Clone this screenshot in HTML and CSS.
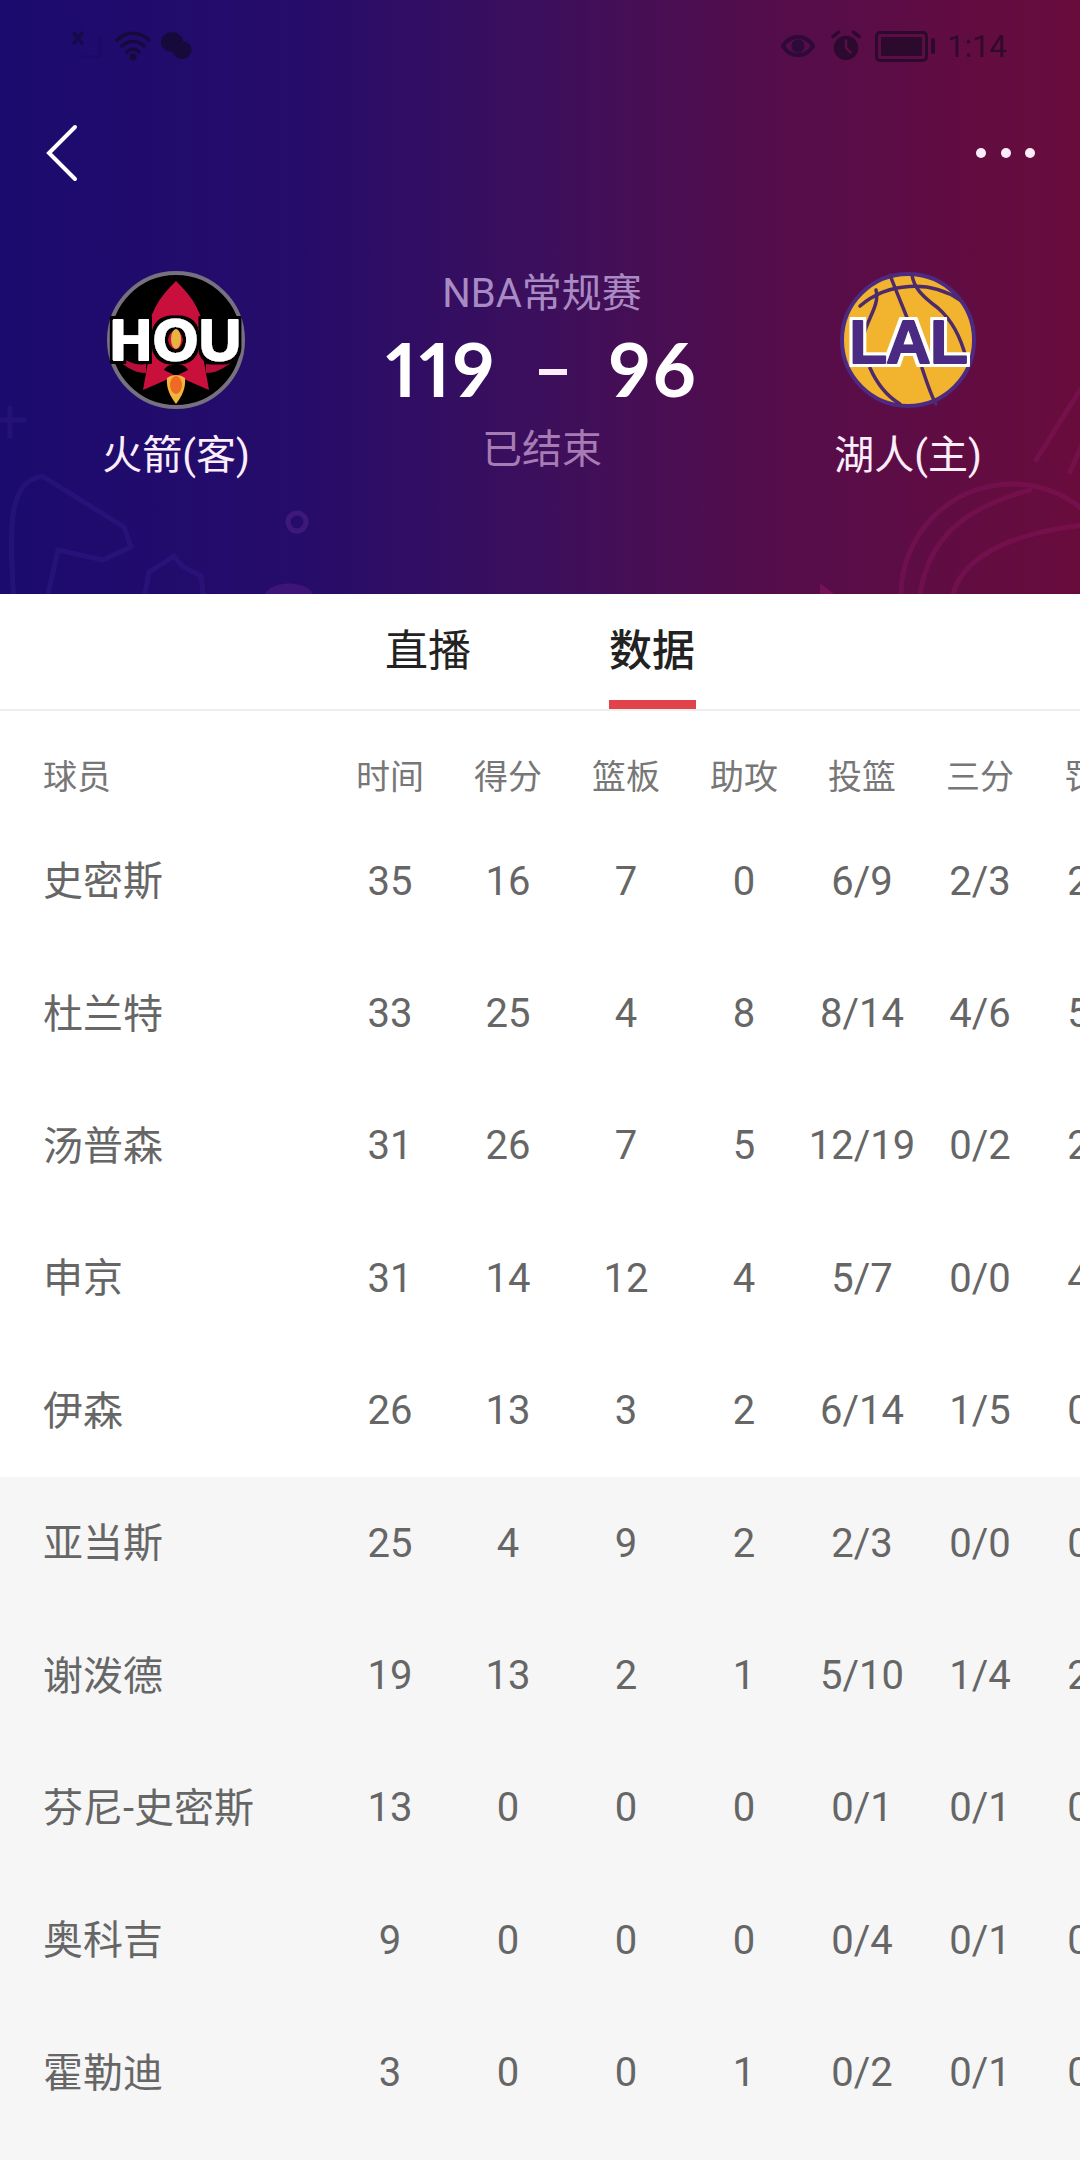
FILE: index.html
```html
<!DOCTYPE html>
<html lang="zh-CN">
<head>
<meta charset="utf-8">
<title>火箭 vs 湖人</title>
<link rel="stylesheet" href="styles.css">
</head>
<body>
<div class="page">
  <header class="hero">
    <svg class="hero-art" viewBox="0 0 1080 594" aria-hidden="true">
      <g class="art-left">
        <path d="M14 600C8 520 10 482 42 476L124 527 131 547 103 560 58 550 48 594"/>
        <path d="M-4 420H24M10 408V436" />
        <circle cx="297" cy="522" r="9"/>
        <path d="M145 594 149 572 165 562 174 556 182 566 201 576 203 594"/>
        <path class="art-fill" d="M265 594C272 580 306 580 313 594Z"/>
      </g>
      <g class="art-right">
        <circle cx="1012" cy="595" r="111"/>
        <path d="M953 594C965 552 1020 532 1085 525"/>
        <path d="M920 594C930 530 975 505 1030 490"/>
        <path d="M1080 390 1036 460M1084 440 1070 472"/>
        <path class="art-fill" d="M820 583 834 594H820Z"/>
      </g>
    </svg>

    <div class="status">
      <div class="status-side">
        <svg class="ico-sim" viewBox="0 0 34 30"><path d="M2 2 10 12M10 2 2 12"/><path class="faint" d="M8 26H28M28 6V26"/></svg>
        <svg class="ico-wifi" viewBox="0 0 36 32"><path d="M2 10C12 1 24 1 34 10M7 16C14 10 22 10 29 16M12 22C16 18 20 18 24 22"/><circle cx="18" cy="27" r="3.5"/></svg>
        <svg class="ico-chat" viewBox="0 0 32 30"><ellipse cx="12" cy="11" rx="11" ry="10"/><ellipse cx="22" cy="19" rx="9.5" ry="9"/></svg>
      </div>
      <div class="status-side">
        <svg class="ico-eye" viewBox="0 0 36 28"><path class="line" d="M2 14C10 1 26 1 34 14 26 27 10 27 2 14Z"/><circle cx="18" cy="14" r="7"/></svg>
        <svg class="ico-alarm" viewBox="0 0 32 32"><circle cx="16" cy="18" r="13"/><path class="line" d="M2 6 8 1M30 6 24 1"/><path class="cut" d="M16 10V18L21 23"/></svg>
        <div class="battery"><span class="battery-fill"></span></div>
        <span class="battery-nub"></span>
        <span class="clock">1:14</span>
      </div>
    </div>

    <nav class="nav">
      <svg class="back" viewBox="0 0 32 58"><path d="M29 3 3 29 29 55"/></svg>
      <div class="dots"><span></span><span></span><span></span></div>
    </nav>

    <section class="match">
      <div class="team">
        <svg class="logo" viewBox="0 0 140 140">
          <defs>
            <filter id="outline-black" x="-10%" y="-20%" width="120%" height="140%">
              <feMorphology in="SourceAlpha" operator="dilate" radius="2.5" result="grown"/>
              <feFlood flood-color="#000"/>
              <feComposite in2="grown" operator="in" result="edge"/>
              <feMerge><feMergeNode in="edge"/><feMergeNode in="SourceGraphic"/></feMerge>
            </filter>
          </defs>
          <circle cx="70" cy="70" r="67" fill="#000" stroke="#77707f" stroke-width="4"/>
          <path class="hou-wing" d="M40 94C28 96 18 90 8 82L14 92C24 100 32 103 40 103ZM100 94C112 96 122 90 132 82L126 92C116 100 108 103 100 103Z"/>
          <path class="hou-red" d="M70 11C52 28 42 46 42 66V92L37 120 60 110 70 104 80 110 103 120 98 92V66C98 46 88 28 70 11Z"/>
          <path fill="#000" d="M58 100C62 92 78 92 82 100L70 106Z"/>
          <path fill="#f1b43c" d="M70 134C64 126 60 118 61 108 66 104 74 104 79 108 80 118 76 126 70 134Z"/>
          <ellipse cx="70" cy="115" rx="6" ry="9" fill="#ef6a23"/>
          <text class="logo-text hou-text" x="70" y="90" filter="url(#outline-black)">HOU</text>
          <ellipse cx="70" cy="69" rx="5" ry="10" fill="#e8b33f"/>
        </svg>
        <div class="team-name">火箭(客)</div>
      </div>

      <div class="center">
        <div class="league">NBA常规赛</div>
        <div class="score"><span>119</span><span class="score-dash"></span><span>96</span></div>
        <div class="state">已结束</div>
      </div>

      <div class="team">
        <svg class="logo" viewBox="0 0 140 140">
          <defs>
            <filter id="outline-white" x="-10%" y="-20%" width="120%" height="140%">
              <feMorphology in="SourceAlpha" operator="dilate" radius="3" result="grown"/>
              <feFlood flood-color="#fff"/>
              <feComposite in2="grown" operator="in" result="edge"/>
              <feMerge><feMergeNode in="edge"/><feMergeNode in="SourceGraphic"/></feMerge>
            </filter>
          </defs>
          <circle cx="70" cy="70" r="66" fill="#f2b32e" stroke="#4c2a83" stroke-width="4"/>
          <g class="lal-seams">
            <path d="M22 36C50 12 92 10 122 30"/>
            <path d="M52 5C60 26 68 44 76 66"/>
            <path d="M74 5C76 18 84 26 100 38 116 52 124 72 128 88"/>
            <path d="M38 20C42 34 30 48 26 64"/>
            <path d="M32 98C40 116 52 128 62 134"/>
            <path d="M84 98C90 116 94 128 98 134"/>
          </g>
          <text class="logo-text lal-text" x="70" y="93" filter="url(#outline-white)">LAL</text>
        </svg>
        <div class="team-name">湖人(主)</div>
      </div>
    </section>
  </header>

  <div class="tabs">
    <div class="tab">直播</div>
    <div class="tab tab-active">数据</div>
  </div>

  <main class="stats">
    <div class="row row-head"><span class="name">球员</span><span>时间</span><span>得分</span><span>篮板</span><span>助攻</span><span>投篮</span><span>三分</span><span>罚球</span></div>
    <div class="row"><span class="name">史密斯</span><span>35</span><span>16</span><span>7</span><span>0</span><span>6/9</span><span>2/3</span><span>2/2</span></div>
    <div class="row"><span class="name">杜兰特</span><span>33</span><span>25</span><span>4</span><span>8</span><span>8/14</span><span>4/6</span><span>5/5</span></div>
    <div class="row"><span class="name">汤普森</span><span>31</span><span>26</span><span>7</span><span>5</span><span>12/19</span><span>0/2</span><span>2/2</span></div>
    <div class="row"><span class="name">申京</span><span>31</span><span>14</span><span>12</span><span>4</span><span>5/7</span><span>0/0</span><span>4/4</span></div>
    <div class="row"><span class="name">伊森</span><span>26</span><span>13</span><span>3</span><span>2</span><span>6/14</span><span>1/5</span><span>0/0</span></div>
    <div class="bench">
      <div class="row"><span class="name">亚当斯</span><span>25</span><span>4</span><span>9</span><span>2</span><span>2/3</span><span>0/0</span><span>0/0</span></div>
      <div class="row"><span class="name">谢泼德</span><span>19</span><span>13</span><span>2</span><span>1</span><span>5/10</span><span>1/4</span><span>2/2</span></div>
      <div class="row"><span class="name">芬尼-史密斯</span><span>13</span><span>0</span><span>0</span><span>0</span><span>0/1</span><span>0/1</span><span>0/0</span></div>
      <div class="row"><span class="name">奥科吉</span><span>9</span><span>0</span><span>0</span><span>0</span><span>0/4</span><span>0/1</span><span>0/0</span></div>
      <div class="row"><span class="name">霍勒迪</span><span>3</span><span>0</span><span>0</span><span>1</span><span>0/2</span><span>0/1</span><span>0/0</span></div>
    </div>
  </main>
</div>
</body>
</html>
```
FILE: styles.css
```css
* { box-sizing: border-box; }
html, body { margin: 0; padding: 0; }
body {
  width: 1080px;
  height: 2160px;
  overflow: hidden;
  background: #fff;
  font-family: Roboto, "Noto Sans CJK SC", sans-serif;
}
.page { display: flex; flex-direction: column; height: 2160px; }

/* hero */
.hero {
  position: relative;
  height: 594px;
  flex: none;
  overflow: hidden;
  background: linear-gradient(90deg, #1b0b6e 0%, #260c6a 28%, #3c0f5c 50%, #530d4c 70%, #690c3c 100%);
}
.hero-art { position: absolute; left: 0; top: 0; width: 1080px; height: 594px; }
.hero-art path, .hero-art circle { fill: none; stroke-width: 5; stroke-linejoin: round; stroke-linecap: round; }
.art-left path, .art-left circle { stroke: #3a2596; opacity: .3; }
.art-left circle { stroke: #5a2a90; opacity: .45; }
.art-right path, .art-right circle { stroke: #8a1660; opacity: .4; }
.hero-art .art-fill { fill: #4f1a82; stroke: none; opacity: .6; }
.art-right .art-fill { fill: #8a1660; }

/* status bar */
.status {
  position: relative;
  height: 92px;
  padding: 0 73px 0 72px;
  display: flex;
  justify-content: space-between;
  align-items: center;
  filter: blur(.7px);
}
.status-side { display: flex; align-items: center; }
.status svg { display: block; }
.status path { fill: none; stroke: #150a3a; stroke-width: 3.5; stroke-linecap: round; }
.status circle, .status ellipse { fill: #150a3a; }
.ico-sim { width: 34px; height: 30px; margin-right: 9px; opacity: .7; }
.ico-sim .faint { opacity: .15; }
.ico-wifi { width: 36px; height: 32px; margin-right: 9px; }
.ico-chat { width: 32px; height: 30px; }
.ico-eye { width: 34px; height: 28px; margin-right: 16px; }
.status .ico-eye path { stroke: #2e0a3c; stroke-width: 4.5; }
.status .ico-eye circle { fill: #2e0a3c; }
.ico-alarm { width: 30px; height: 32px; margin-right: 14px; }
.status .ico-alarm circle { fill: #2c0a30; }
.status .ico-alarm .line { stroke: #2c0a30; }
.status .ico-alarm .cut { stroke: #5c0e46; stroke-width: 2.5; }
.battery {
  width: 53px;
  height: 31px;
  border: 3px solid #2c0a2e;
  border-radius: 5px;
  padding: 3px;
  display: flex;
}
.battery-fill { flex: 1; background: #2c0a2e; border-radius: 1px; }
.battery-nub { width: 4px; height: 16px; margin: 0 12px 0 3px; background: #2c0a2e; border-radius: 2px; }
.clock { font-size: 31px; line-height: 1; color: #30092e; }

/* nav */
.nav {
  position: relative;
  height: 122px;
  padding: 0 45px 0 46px;
  display: flex;
  justify-content: space-between;
  align-items: center;
}
.back { width: 32px; height: 58px; display: block; }
.back path { fill: none; stroke: #fff; stroke-width: 4; stroke-linecap: round; stroke-linejoin: miter; }
.dots { display: flex; gap: 14.5px; }
.dots span { width: 10px; height: 10px; border-radius: 50%; background: #fbeefa; }

/* match */
.match {
  position: relative;
  display: grid;
  grid-template-columns: 300px 1fr 300px;
  padding: 0 22px 0 26px;
}
.team { display: flex; flex-direction: column; align-items: center; padding-top: 56px; }
.logo { width: 140px; height: 140px; display: block; flex: none; }
.logo-text {
  font-family: "Liberation Sans", sans-serif;
  font-weight: 700;
  text-anchor: middle;
  stroke-linejoin: round;
}
.hou-text { font-size: 58px; fill: #fff; stroke: #fff; stroke-width: 2; letter-spacing: 1px; }
.lal-text { font-size: 62px; fill: #4c2a83; stroke: #4c2a83; stroke-width: 2; letter-spacing: -1px; }
.hou-red { fill: #c9103d; }
.hou-wing { fill: #b70f39; }
.lal-seams path { fill: none; stroke: #4c2a6b; stroke-width: 3.5; stroke-linecap: round; }
.team-name { margin-top: 17px; font-size: 40px; line-height: 58px; color: #fbeefa; }

.center { display: flex; flex-direction: column; align-items: center; padding-top: 52px; }
.league { font-size: 40px; line-height: 56px; color: #a98bc4; }
.score {
  display: flex;
  align-items: center;
  height: 92px;
  margin-top: 0;
  font-family: Lato, sans-serif;
  font-variant-numeric: proportional-nums;
  font-feature-settings: "pnum" 1;
  font-weight: 700;
  font-size: 75px;
  letter-spacing: 2.5px;
  color: #fff;
  line-height: 1;
}
.score-dash { width: 28px; height: 6px; background: #fbeefa; margin: 8px 42px 0 42px; }
.state { font-size: 40px; line-height: 56px; margin-top: 8px; color: #a77cb4; }

/* tabs */
.tabs {
  flex: none;
  height: 117px;
  display: flex;
  justify-content: center;
  gap: 137px;
  border-bottom: 2px solid #eeeeee;
}
.tab {
  width: 87px;
  height: 115px;
  padding-top: 27px;
  border-bottom: 9px solid transparent;
  font-size: 43px;
  line-height: 60px;
  text-align: center;
  color: #222;
  white-space: nowrap;
}
.tab-active { border-bottom-color: #e2434a; font-weight: 500; }

/* table */
.stats { flex: 1; display: flex; flex-direction: column; overflow: hidden; min-height: 0; }
.row {
  display: grid;
  grid-template-columns: 331px repeat(7, 118px);
  width: 1157px;
  height: 132.4px;
  align-items: center;
  flex: none;
  font-size: 40px;
  color: #666;
  text-align: center;
}
.row .name { padding: 0 0 6px 43px; text-align: left; font-size: 40px; white-space: nowrap; }
.row-head { height: 104px; padding-top: 22px; font-size: 34px; color: #777; }
.row-head .name { font-size: 34px; padding-bottom: 0; }
.bench { flex: 1; background: #f6f6f6; }
```
